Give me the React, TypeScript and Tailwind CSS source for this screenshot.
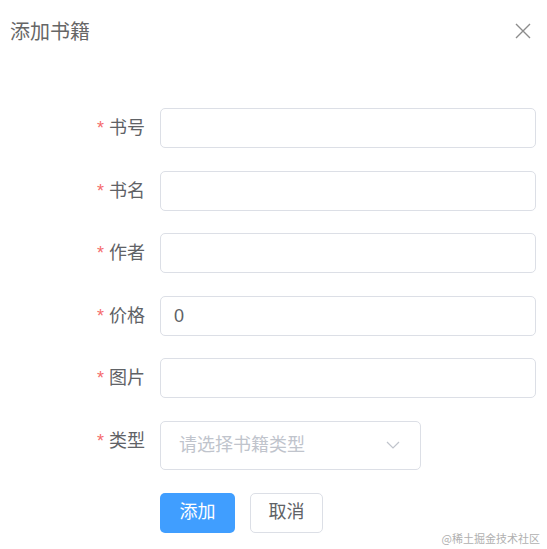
import React from "react";

const font = { fontFamily: '"Liberation Sans", "Noto Sans CJK SC", sans-serif' };

function Row({ label, children, mb = "mb-[22.5px]" }: { label: string; children: React.ReactNode; mb?: string }) {
  return (
    <div className={`flex items-start ${mb}`}>
      <div className="w-[160px] shrink-0 pr-[15px] text-right text-[18px] leading-[40px] text-[#606266]">
        <span className="mr-[5px] text-[#f56c6c]">*</span>
        {label}
      </div>
      {children}
    </div>
  );
}

function TextInput({ value }: { value?: string }) {
  return (
    <div className="h-[40px] w-[376px] rounded-[5px] border border-[#dcdfe6] bg-white px-[13px] text-[18px] leading-[38px] text-[#606266]">
      {value}
    </div>
  );
}

export default function App() {
  return (
    <div className="relative h-[549px] w-[547px] overflow-hidden bg-white" style={font}>
      <div className="flex items-center justify-between pl-[10px] pr-[16px] pt-[18px]">
        <div className="text-[20px] leading-[28px] text-[#666666]">添加书籍</div>
        <svg width="16" height="16" viewBox="0 0 16 16" className="-mt-[2px]">
          <path d="M1 1 L15 15 M15 1 L1 15" stroke="#8c8c8c" strokeWidth="1.4" fill="none" />
        </svg>
      </div>
      <div className="pt-[62px]">
        <Row label="书号"><TextInput /></Row>
        <Row label="书名"><TextInput /></Row>
        <Row label="作者"><TextInput /></Row>
        <Row label="价格"><TextInput value="0" /></Row>
        <Row label="图片"><TextInput /></Row>
        <Row label="类型" mb="mb-[23px]">
          <div className="flex h-[49px] w-[261px] items-center justify-between rounded-[5px] border border-[#dcdfe6] bg-white pl-[18px] pr-[20px]">
            <span className="text-[18px] text-[#c0c4cc]">请选择书籍类型</span>
            <svg width="14" height="8" viewBox="0 0 14 8">
              <path d="M1 1 L7 7 L13 1" stroke="#c0c4cc" strokeWidth="1.2" fill="none" />
            </svg>
          </div>
        </Row>
        <div className="flex gap-[15px] pl-[160px]">
          <div className="flex h-[40px] w-[75px] items-center justify-center rounded-[5px] bg-[#409eff] text-[18px] text-white">添加</div>
          <div className="flex h-[40px] w-[73px] items-center justify-center rounded-[5px] border border-[#dcdfe6] bg-white text-[18px] text-[#606266]">取消</div>
        </div>
      </div>
      <div className="absolute bottom-[4px] right-[7px] text-[11px] leading-[14px] text-[#b0b0b0]" style={{ fontFamily: '"Noto Sans CJK SC", sans-serif' }}>
        @稀土掘金技术社区
      </div>
    </div>
  );
}
